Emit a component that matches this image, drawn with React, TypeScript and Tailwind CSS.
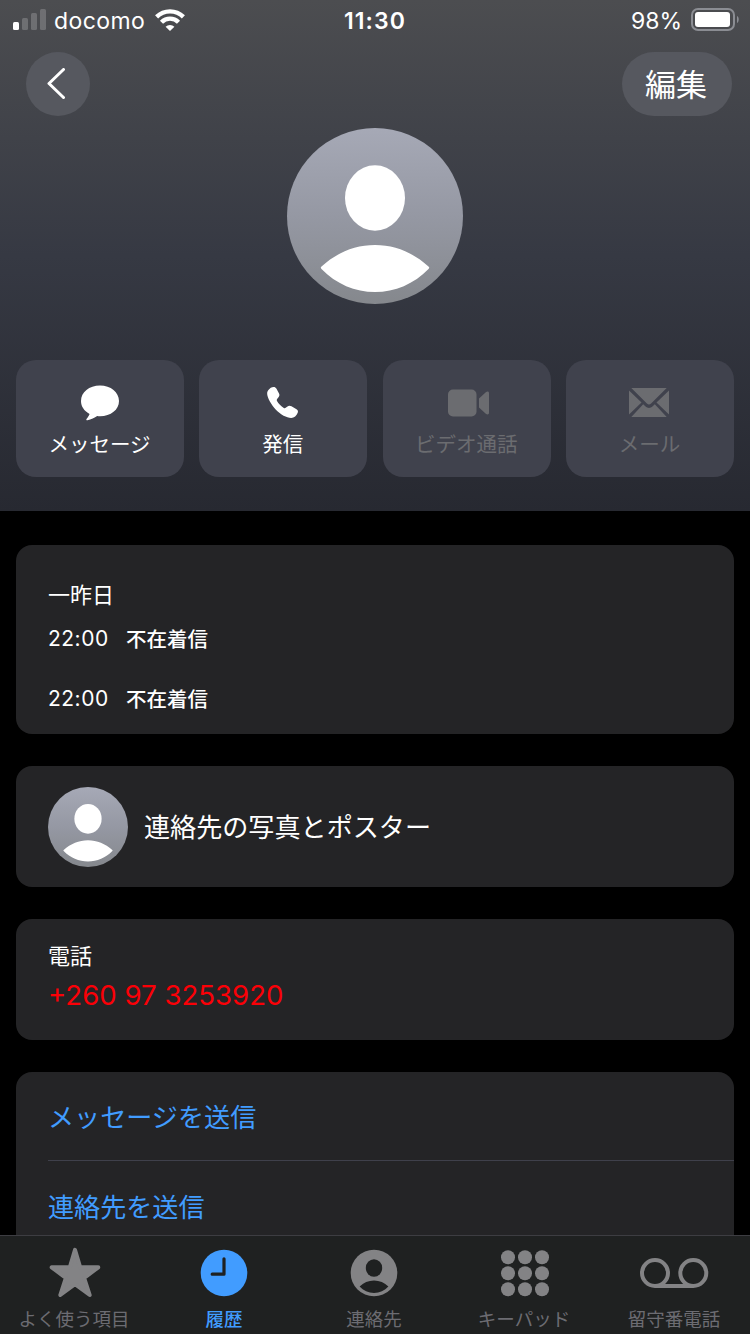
import type { ReactNode } from "react";

const MessageIcon = () => (
  <svg className="w-10 h-9" viewBox="0 0 40 36" fill="currentColor">
    <path d="M20 0.500C9.200 0.500 1 7.200 1 16c0 5.500 3.200 9.900 8.200 12.700.3.200.4.500.2.900-.5 1.300-1.600 2.900-2.700 4.100-.8.900-.3 1.800.8 1.600 3.500-.6 7.200-2.600 9.700-4.300.9.200 1.800.2 2.800.2 10.800 0 19-6.500 19-15.200S30.800.5 20 .5z" />
  </svg>
);

const PhoneIcon = () => (
  <svg className="w-8 h-8" viewBox="0 0 32 32" fill="currentColor">
    <path d="M1.200 3.300C2.700 1.200 4.700 0 6.700 0c1.200 0 2 .6 2.800 1.700l2.400 4.600c.8 1.500.7 2.700-.4 4l-1.400 1.700c-.5.600-.5 1.200-.1 1.900 1.400 2.500 4.100 5.200 6.800 7 .7.400 1.300.3 1.900-.2l1.800-1.300c1.200-.9 2.500-.9 4-.1l5 3c1.400.9 1.800 2 1.200 3.500-1.100 2.900-3.500 5.200-6.500 5.200-4.700 0-10.500-3.400-15.300-8.200C4.200 17.500.5 11.200.2 7.300.1 5.700.3 4.500 1.200 3.300z" />
  </svg>
);

const VideoIcon = () => (
  <svg className="w-[42px] h-7 ml-1.5" viewBox="0 0 42 28" fill="currentColor">
    <rect x="0" y="0.500" width="28.500" height="27" rx="5" />
    <path d="M31 9.500 37.800 3.300c1.500-1.300 3.200-.9 3.200.9v19.600c0 1.800-1.700 2.200-3.200.9L31 18.500z" />
  </svg>
);

const MailIcon = () => (
  <svg className="w-10 h-[29px]" viewBox="0 0 40 29" fill="currentColor">
    <path d="M2.300 0h35.400L22.100 15.400c-1.500 1.500-2.700 1.500-4.200 0z" />
    <path d="M0 2.500 12.500 14.500 0 26.500z" />
    <path d="M40 2.500 27.500 14.500 40 26.500z" />
    <path d="M2.300 29 14.200 16.300l2.100 2c2.400 2.200 5 2.200 7.400 0l2.100-2L37.700 29z" />
  </svg>
);

const Avatar = ({ className }: { className: string }) => (
  <div className={`rounded-full bg-linear-to-b from-[#a6a9b6] via-[#9598a3] to-[#85888d] ${className}`}>
    <svg className="w-full h-full" viewBox="0 0 176 176" fill="white">
      <ellipse cx="88" cy="70" rx="30" ry="32.700" />
      <path d="M34.500 138.500C50 124.500 68 117 88 117s38 7.500 53.500 21.500c1 .9 1 1.600 0 2.500C127 156 108 164 88 164s-39-8-53.500-23c-1-.9-1-1.600 0-2.500z" />
    </svg>
  </div>
);

const actions = [
  { label: "メッセージ", icon: <MessageIcon />, enabled: true },
  { label: "発信", icon: <PhoneIcon />, enabled: true },
  { label: "ビデオ通話", icon: <VideoIcon />, enabled: false },
  { label: "メール", icon: <MailIcon />, enabled: false },
];

const calls = [
  { time: "22:00", type: "不在着信" },
  { time: "22:00", type: "不在着信" },
];

const keyRows = [8.2, 24.2, 40.2];
const keyCols = [8, 25, 42];

const tabs = [
  {
    label: "よく使う項目",
    active: false,
    icon: (
      <svg className="w-[52px] h-[52px] ml-px" viewBox="0 0 52 52" fill="currentColor" stroke="currentColor" strokeWidth="4" strokeLinejoin="round">
        <path d="M26 2.800 31.200 20.300H49.300L35.200 31 40.700 48 26 37.200 11.300 48 16.800 31 2.700 20.300H20.800z" />
      </svg>
    ),
  },
  {
    label: "履歴",
    active: true,
    icon: (
      <svg className="w-12 h-12" viewBox="0 0 48 48">
        <circle cx="24" cy="24" r="23.300" fill="currentColor" />
        <path d="M24 9.800V25.200H12.200" fill="none" stroke="#1f2121" strokeWidth="3.200" strokeLinecap="round" strokeLinejoin="round" />
      </svg>
    ),
  },
  {
    label: "連絡先",
    active: false,
    icon: (
      <svg className="w-12 h-12" viewBox="0 0 48 48">
        <circle cx="24" cy="24" r="23.300" fill="currentColor" />
        <ellipse cx="24" cy="19" rx="8.200" ry="8.700" fill="#1f2121" />
        <path d="M9.600 37.600C13.500 33.800 18.500 31.600 24 31.600s10.500 2.200 14.400 6C34.600 41.800 29.600 44 24 44s-10.600-2.200-14.400-6.400z" fill="#1f2121" />
      </svg>
    ),
  },
  {
    label: "キーパッド",
    active: false,
    icon: (
      <svg className="w-[50px] h-12 ml-px" viewBox="0 0 50 48" fill="currentColor">
        {keyRows.map((y) => keyCols.map((x) => <circle key={`${x}-${y}`} cx={x} cy={y} r="7" />))}
      </svg>
    ),
  },
  {
    label: "留守番電話",
    active: false,
    icon: (
      <svg className="w-[70px] h-12" viewBox="0 0 70 48" fill="none" stroke="currentColor" strokeWidth="4">
        <circle cx="16" cy="24" r="13" />
        <circle cx="54.300" cy="24" r="13" />
        <path d="M16 37H54.300" />
      </svg>
    ),
  },
];

const Card = ({ className, children }: { className: string; children: ReactNode }) => (
  <div className={`mx-4 rounded-2xl bg-[#242426] ${className}`}>{children}</div>
);

export default function App() {
  return (
    <div className="w-[750px] h-[1334px] flex flex-col overflow-hidden bg-black text-white font-['Inter','Noto_Sans_CJK_JP',sans-serif]">
      {/* Header */}
      <header className="h-[511px] shrink-0 bg-linear-to-b from-[#4c4d50] via-[#363943] to-[#272931]">
        {/* Status bar */}
        <div className="h-10 grid grid-cols-3 items-center pl-[13px] pr-[11px] text-[23px] leading-10">
          <div className="h-10 flex items-center">
            <svg className="w-[34px] h-[22px]" viewBox="0 0 34 22" fill="currentColor">
              <rect x="0" y="13" width="6" height="8" rx="1.500" />
              <rect x="9" y="9" width="6" height="12" rx="1.500" opacity="0.200" />
              <rect x="18" y="4" width="6" height="17" rx="1.500" opacity="0.200" />
              <rect x="27" y="0" width="6" height="21" rx="1.500" opacity="0.200" />
            </svg>
            <span className="ml-[7px] pt-0.5 tracking-[0.400px]">docomo</span>
            <svg className="ml-[10px] w-[30px] h-[22px]" viewBox="0 0 30 22" fill="none" stroke="currentColor" strokeWidth="4.400">
              <path d="M1.600 7.800a19.200 19.200 0 0 1 26.800 0" />
              <path d="M6.500 13.200a12 12 0 0 1 17 0" />
              <path d="M10.600 17.700a6.300 6.300 0 0 1 8.800 0L15 22z" fill="currentColor" stroke="none" />
            </svg>
          </div>
          <div className="h-10 text-center pt-px pr-0.5 font-semibold tracking-[1.100px]">11:30</div>
          <div className="h-10 flex items-center justify-end">
            <span className="pt-0.5">98%</span>
            <svg className="ml-[9px] w-12 h-6" viewBox="0 0 48 24" fill="none">
              <rect x="1" y="1" width="42" height="21" rx="6" stroke="#8b8d93" strokeWidth="2" />
              <rect x="4" y="4" width="35" height="15" rx="3" fill="white" />
              <path d="M46 8c1.200.6 1.700 1.900 1.700 3.500s-.5 2.900-1.700 3.500z" fill="#8b8d93" />
            </svg>
          </div>
        </div>

        <div className="mt-3 h-16 flex items-center justify-between pl-[26px] pr-[18px]">
          <button className="w-16 h-16 rounded-full bg-[#56585f] flex items-center justify-center">
            <svg className="w-8 h-8 -ml-1.5" viewBox="0 0 32 32" fill="none" stroke="currentColor" strokeWidth="3" strokeLinecap="round" strokeLinejoin="round">
              <path d="M24.500 1.500 10 15.500 24.500 29.500" />
            </svg>
          </button>
          <button className="w-[110px] h-16 pr-0.5 rounded-full bg-[#56585f] text-[31px] leading-none">編集</button>
        </div>

        <Avatar className="mt-3 mx-auto w-44 h-44" />

        <div className="mt-14 px-4 grid grid-cols-4 gap-[15.300px]">
          {actions.map((action) => (
            <div
              key={action.label}
              className={`h-[117px] rounded-[20px] bg-[#40424d] flex flex-col items-center pt-[25px] pr-px ${action.enabled ? "text-white" : "text-[#6b6c70]"}`}
            >
              <div className="h-[35px] flex items-center">{action.icon}</div>
              <span className="mt-[9px] text-[20.500px] leading-8">{action.label}</span>
            </div>
          ))}
        </div>
      </header>

      {/* Content */}
      <main className="flex-1 min-h-0 overflow-hidden pt-[34px] flex flex-col gap-8">
        <Card className="h-[189px] shrink-0 px-8 pt-8">
          <p className="text-[22px] leading-9">一昨日</p>
          {calls.map((call, idx) => (
            <div key={idx} className="h-[60px] flex items-start pt-[10px] text-[21px] leading-8">
              <span className="w-[78px] tracking-[0.500px]">{call.time}</span>
              <span className="pt-px text-[20.500px] font-medium">{call.type}</span>
            </div>
          ))}
        </Card>

        <Card className="h-[121px] shrink-0 px-8 flex items-center gap-4">
          <Avatar className="w-20 h-20" />
          <span className="pt-0.5 text-[26.100px]">連絡先の写真とポスター</span>
        </Card>

        <Card className="h-[121px] shrink-0 px-8 pt-[21px]">
          <p className="text-[22px] leading-8">電話</p>
          <p className="mt-[3px] text-[27.600px] leading-10 text-[#fb0007]">+260 97 3253920</p>
        </Card>

        <Card className="h-[240px] shrink-0 pl-8 text-[26.100px] text-[#419cff]">
          <div className="h-[89px] pt-[3px] flex items-center border-b border-[#3f404b]">メッセージを送信</div>
          <div className="h-[90px] pt-[3px] flex items-center">連絡先を送信</div>
        </Card>
      </main>

      {/* Tab bar */}
      <nav className="h-[99px] shrink-0 grid grid-cols-5 bg-[#1f2121] border-t border-[#3d3d42]">
        {tabs.map((tab) => (
          <div key={tab.label} className={`flex flex-col items-center pt-3 pr-0.5 ${tab.active ? "text-[#419cff]" : "text-[#838385]"}`}>
            <div className="h-[50px] flex items-center">{tab.icon}</div>
            <span className={`mt-[7px] text-[18.500px] leading-7 ${tab.active ? "font-medium" : "text-[#6c6c72]"}`}>{tab.label}</span>
          </div>
        ))}
      </nav>
    </div>
  );
}
